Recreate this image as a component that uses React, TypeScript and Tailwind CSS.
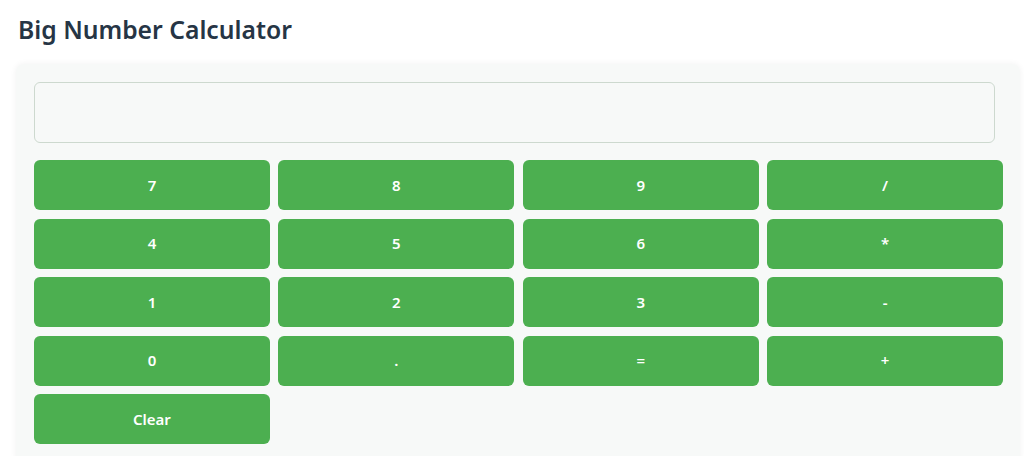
import React from "react";

const keys = ["7", "8", "9", "/", "4", "5", "6", "*", "1", "2", "3", "-", "0", ".", "=", "+", "Clear"];

export default function App() {
  return (
    <div
      className="min-h-[456px] bg-white text-[#2c3e50] overflow-hidden"
      style={{ fontFamily: '"Noto Sans", "Open Sans", sans-serif' }}
    >
      <div className="pt-[12px] pl-[18px]">
        <h1 className="text-[24.7px] leading-[36px] font-semibold text-[#263545]">Big Number Calculator</h1>
      </div>
      <div className="ml-[16px] mr-[4px] mt-[16px] rounded-[8px] bg-[#f7f9f8] shadow-[0_0_6px_rgba(0,0,0,0.06)] pt-[18px] pl-[18px] pr-[17px] pb-[20px]">
        <input
          className="block w-[961px] h-[61px] rounded-[6px] border border-[#cdd9cf] bg-[#f7f9f8] px-3 outline-none"
          readOnly
        />
        <div className="mt-[17px] grid grid-cols-4 gap-x-[8.5px] gap-y-[8.5px]">
          {keys.map((k) => (
            <button
              key={k}
              className="h-[50px] rounded-[6px] bg-[#4caf50] text-white text-[15px] font-semibold"
            >
              {k}
            </button>
          ))}
        </div>
      </div>
    </div>
  );
}
